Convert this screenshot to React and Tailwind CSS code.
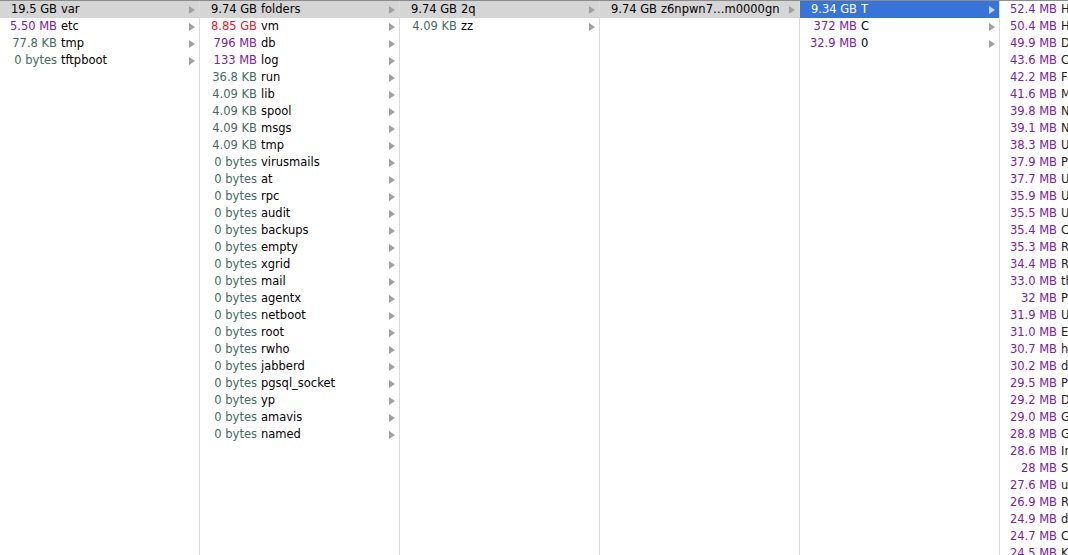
import React from "react";

const sizeColor = {
  GB: "text-[#e3202a]",
  MB: "text-[#7a22a3]",
  KB: "text-[#426b5e]",
  bytes: "text-[#426b5e]",
};

const columns = [
  {
    selected: 0,
    rows: [
      ["19.5", "GB", "var"],
      ["5.50", "MB", "etc"],
      ["77.8", "KB", "tmp"],
      ["0", "bytes", "tftpboot"],
    ],
  },
  {
    selected: 0,
    rows: [
      ["9.74", "GB", "folders"],
      ["8.85", "GB", "vm"],
      ["796", "MB", "db"],
      ["133", "MB", "log"],
      ["36.8", "KB", "run"],
      ["4.09", "KB", "lib"],
      ["4.09", "KB", "spool"],
      ["4.09", "KB", "msgs"],
      ["4.09", "KB", "tmp"],
      ["0", "bytes", "virusmails"],
      ["0", "bytes", "at"],
      ["0", "bytes", "rpc"],
      ["0", "bytes", "audit"],
      ["0", "bytes", "backups"],
      ["0", "bytes", "empty"],
      ["0", "bytes", "xgrid"],
      ["0", "bytes", "mail"],
      ["0", "bytes", "agentx"],
      ["0", "bytes", "netboot"],
      ["0", "bytes", "root"],
      ["0", "bytes", "rwho"],
      ["0", "bytes", "jabberd"],
      ["0", "bytes", "pgsql_socket"],
      ["0", "bytes", "yp"],
      ["0", "bytes", "amavis"],
      ["0", "bytes", "named"],
    ],
  },
  {
    selected: 0,
    rows: [
      ["9.74", "GB", "2q"],
      ["4.09", "KB", "zz"],
    ],
  },
  {
    selected: 0,
    rows: [["9.74", "GB", "z6npwn7…m0000gn"]],
  },
  {
    selected: 0,
    active: true,
    rows: [
      ["9.34", "GB", "T"],
      ["372", "MB", "C"],
      ["32.9", "MB", "0"],
    ],
  },
];

const lastRows = [
  ["52.4", "Help"], ["50.4", "Helper"], ["49.9", "Data"], ["43.6", "Cache"],
  ["42.2", "Fonts"], ["41.6", "Mail"], ["39.8", "Notes"], ["39.1", "News"],
  ["38.3", "Update"], ["37.9", "Preview"], ["37.7", "Users"], ["35.9", "Uploads"],
  ["35.5", "Util"], ["35.4", "Code"], ["35.3", "Res"], ["34.4", "Root"],
  ["33.0", "thumbs"], ["32", "Photos"], ["31.9", "Usage"], ["31.0", "Export"],
  ["30.7", "history"], ["30.2", "data"], ["29.5", "Pages"], ["29.2", "Docs"],
  ["29.0", "Games"], ["28.8", "Graphs"], ["28.6", "Index"], ["28", "Shared"],
  ["27.6", "user"], ["26.9", "Recent"], ["24.9", "downloads"], ["24.7", "Config"],
  ["24.5", "Keys"],
];

const Arrow = ({ white }) => (
  <svg width="6" height="8" viewBox="0 0 6 8" className="shrink-0">
    <polygon points="0,0 6,4 0,8" fill={white ? "#c9d7f2" : "#a0a0a0"} />
  </svg>
);

const Row = ({ size, unit, name, selected, active }) => {
  let bg = "";
  let sizeCls = sizeColor[unit];
  let nameCls = "text-black";
  if (selected && active) {
    bg = "bg-[#3874d8]";
    sizeCls = "text-white";
    nameCls = "text-white";
  } else if (selected) {
    bg = "bg-[#d5d5d5]";
    sizeCls = "text-black";
  }
  return (
    <div className={`flex items-center h-[17px] pr-[4px] ${bg}`}>
      <span className={`w-[57px] shrink-0 text-right whitespace-nowrap ${sizeCls}`}>
        {size} {unit}
      </span>
      <span className={`ml-[4px] flex-1 whitespace-nowrap overflow-hidden ${nameCls}`}>
        {name}
      </span>
      <Arrow white={selected && active} />
    </div>
  );
};

export default function App() {
  return (
    <div
      className="h-[555px] w-[1068px] overflow-hidden bg-white border-t border-[#8c8c8c] flex text-[11.5px] leading-[17px]"
      style={{ fontFamily: '"DejaVu Sans", "Liberation Sans", sans-serif' }}
    >
      {columns.map((col, ci) => (
        <div key={ci} className="w-[200px] shrink-0 border-r border-[#dadada] overflow-hidden">
          {col.rows.map((r, ri) => (
            <Row
              key={ri}
              size={r[0]}
              unit={r[1]}
              name={r[2]}
              selected={ri === col.selected}
              active={col.active}
            />
          ))}
        </div>
      ))}
      <div className="flex-1 overflow-hidden">
        {lastRows.map((r, i) => (
          <div key={i} className="flex items-center h-[17px]">
            <span className="w-[57px] shrink-0 text-right whitespace-nowrap text-[#7a22a3]">
              {r[0]} MB
            </span>
            <span className="ml-[4px] whitespace-nowrap text-[#222]">{r[1]}</span>
          </div>
        ))}
      </div>
    </div>
  );
}
